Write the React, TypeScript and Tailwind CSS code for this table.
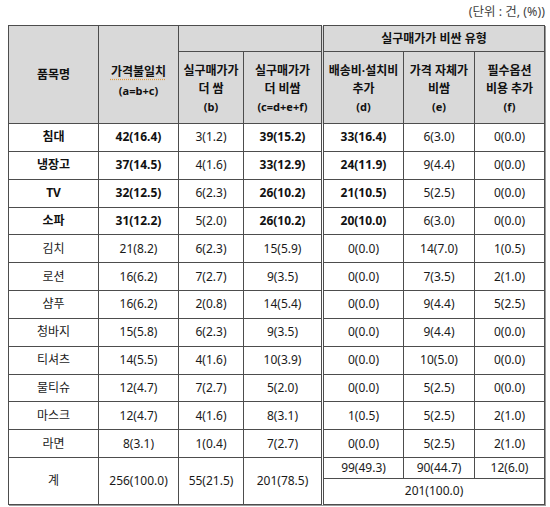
import React from "react";

type Row = {
  name: string;
  a: string;
  b: string;
  c: string;
  d: string;
  e: string;
  f: string;
  bold?: boolean;
};

const rows: Row[] = [
  { name: "침대", a: "42(16.4)", b: "3(1.2)", c: "39(15.2)", d: "33(16.4)", e: "6(3.0)", f: "0(0.0)", bold: true },
  { name: "냉장고", a: "37(14.5)", b: "4(1.6)", c: "33(12.9)", d: "24(11.9)", e: "9(4.4)", f: "0(0.0)", bold: true },
  { name: "TV", a: "32(12.5)", b: "6(2.3)", c: "26(10.2)", d: "21(10.5)", e: "5(2.5)", f: "0(0.0)", bold: true },
  { name: "소파", a: "31(12.2)", b: "5(2.0)", c: "26(10.2)", d: "20(10.0)", e: "6(3.0)", f: "0(0.0)", bold: true },
  { name: "김치", a: "21(8.2)", b: "6(2.3)", c: "15(5.9)", d: "0(0.0)", e: "14(7.0)", f: "1(0.5)" },
  { name: "로션", a: "16(6.2)", b: "7(2.7)", c: "9(3.5)", d: "0(0.0)", e: "7(3.5)", f: "2(1.0)" },
  { name: "샴푸", a: "16(6.2)", b: "2(0.8)", c: "14(5.4)", d: "0(0.0)", e: "9(4.4)", f: "5(2.5)" },
  { name: "청바지", a: "15(5.8)", b: "6(2.3)", c: "9(3.5)", d: "0(0.0)", e: "9(4.4)", f: "0(0.0)" },
  { name: "티셔츠", a: "14(5.5)", b: "4(1.6)", c: "10(3.9)", d: "0(0.0)", e: "10(5.0)", f: "0(0.0)" },
  { name: "물티슈", a: "12(4.7)", b: "7(2.7)", c: "5(2.0)", d: "0(0.0)", e: "5(2.5)", f: "0(0.0)" },
  { name: "마스크", a: "12(4.7)", b: "4(1.6)", c: "8(3.1)", d: "1(0.5)", e: "5(2.5)", f: "2(1.0)" },
  { name: "라면", a: "8(3.1)", b: "1(0.4)", c: "7(2.7)", d: "0(0.0)", e: "5(2.5)", f: "2(1.0)" },
];

const cell = "border border-[#4d4d4d] text-center align-middle p-0";
const dbl = "border-double border-r-[3px]";

export default function App() {
  return (
    <div className="w-[550px] h-[507px] bg-white text-[#1a1a1a] font-['Noto_Sans','Noto_Sans_CJK_KR',sans-serif] text-[12px] leading-[16px]">
      <div className="h-[25px] flex justify-end pr-[5px] pt-[4px] text-[12.5px] text-[#444]">
        (단위 : 건, (%))
      </div>
      <table className="ml-[8px] w-[536px] table-fixed border-collapse shadow-[1px_1px_0_#9a9a9a]">
        <colgroup>
          <col className="w-[90px]" />
          <col className="w-[80px]" />
          <col className="w-[65px]" />
          <col className="w-[79px]" />
          <col className="w-[81px]" />
          <col className="w-[71px]" />
          <col className="w-[70px]" />
        </colgroup>
        <thead className="bg-[#d9d9d9] font-bold text-[#111]">
          <tr className="h-[26px]">
            <th rowSpan={2} className={cell}>
              품목명
            </th>
            <th rowSpan={2} className={`${cell} pt-[12px]`}>
              <div className="leading-[18px] underline decoration-dotted decoration-[#e59b3c] underline-offset-[3px]">
                가격불일치
              </div>
              <div className="text-[11px] leading-[16px] mt-[2px]">(a=b+c)</div>
            </th>
            <th colSpan={2} className={`${cell} ${dbl}`}></th>
            <th colSpan={3} className={cell}>
              실구매가가 비싼 유형
            </th>
          </tr>
          <tr className="h-[72px]">
            <th className={`${cell} pt-[2px]`}>
              <div className="leading-[18px]">실구매가가</div>
              <div className="leading-[18px]">더 쌈</div>
              <div className="text-[11px] leading-[18px]">(b)</div>
            </th>
            <th className={`${cell} ${dbl} pt-[2px]`}>
              <div className="leading-[18px]">실구매가가</div>
              <div className="leading-[18px]">더 비쌈</div>
              <div className="text-[11px] leading-[18px]">(c=d+e+f)</div>
            </th>
            <th className={`${cell} pt-[2px]`}>
              <div className="leading-[18px] whitespace-nowrap">배송비·설치비</div>
              <div className="leading-[18px]">추가</div>
              <div className="text-[11px] leading-[18px]">(d)</div>
            </th>
            <th className={`${cell} pt-[2px]`}>
              <div className="leading-[18px] whitespace-nowrap">가격 자체가</div>
              <div className="leading-[18px]">비쌈</div>
              <div className="text-[11px] leading-[18px]">(e)</div>
            </th>
            <th className={`${cell} pt-[2px]`}>
              <div className="leading-[18px]">필수옵션</div>
              <div className="leading-[18px]">비용 추가</div>
              <div className="text-[11px] leading-[18px]">(f)</div>
            </th>
          </tr>
        </thead>
        <tbody>
          {rows.map((r) => {
            const b = r.bold ? "font-bold text-[#111]" : "";
            return (
              <tr key={r.name} className="h-[27.85px]">
                <td className={`${cell} ${b}`}>{r.name}</td>
                <td className={`${cell} ${b}`}>{r.a}</td>
                <td className={cell}>{r.b}</td>
                <td className={`${cell} ${dbl} ${b}`}>{r.c}</td>
                <td className={`${cell} ${b}`}>{r.d}</td>
                <td className={cell}>{r.e}</td>
                <td className={cell}>{r.f}</td>
              </tr>
            );
          })}
          <tr className="h-[21px]">
            <td rowSpan={2} className={cell}>
              계
            </td>
            <td rowSpan={2} className={cell}>
              256(100.0)
            </td>
            <td rowSpan={2} className={cell}>
              55(21.5)
            </td>
            <td rowSpan={2} className={`${cell} ${dbl}`}>
              201(78.5)
            </td>
            <td className={cell}>99(49.3)</td>
            <td className={cell}>90(44.7)</td>
            <td className={cell}>12(6.0)</td>
          </tr>
          <tr className="h-[25.5px]">
            <td colSpan={3} className={cell}>
              201(100.0)
            </td>
          </tr>
        </tbody>
      </table>
    </div>
  );
}
